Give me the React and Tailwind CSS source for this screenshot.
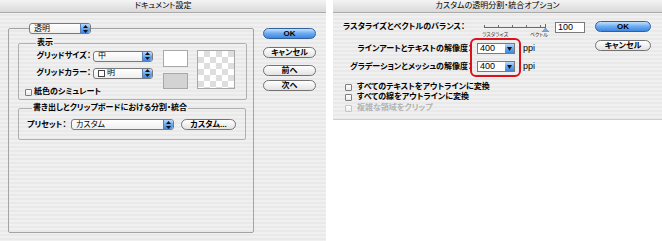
import React from "react";

const stripe =
  "bg-[repeating-linear-gradient(180deg,#f0f0f0_0px,#f0f0f0_2px,#e9e9e9_2px,#e9e9e9_4px)]";

function Stepper() {
  return (
    <div className="flex w-[10px] items-center justify-center rounded-r-[3px] border-l border-[#5b7fb0] bg-linear-to-b from-[#b9d9fb] via-[#6aa8ee] to-[#3f86de]">
      <svg width="5" height="8" viewBox="0 0 5 8">
        <path d="M2.5 0 L5 3 H0 Z" fill="#111" />
        <path d="M0 5 H5 L2.5 8 Z" fill="#111" />
      </svg>
    </div>
  );
}

function Popup({ w, children }) {
  return (
    <div
      className={`flex h-[11px] ${w} items-stretch rounded-[3px] border border-[#7a7a7a] bg-linear-to-b from-white to-[#efefef]`}
    >
      <div className="flex flex-1 items-center gap-[2px] overflow-hidden pl-[4px] text-[8px] leading-none">
        {children}
      </div>
      <Stepper />
    </div>
  );
}

function Btn({ w, blue, children }) {
  return (
    <div
      className={`flex h-[11px] ${w} items-center justify-center rounded-full border text-[8px] font-bold leading-none ${
        blue
          ? "border-[#31609f] bg-linear-to-b from-[#c4e0fd] via-[#6aaaf0] to-[#3e87df]"
          : "border-[#737373] bg-linear-to-b from-white to-[#e3e3e3]"
      }`}
    >
      {children}
    </div>
  );
}

function Check({ disabled }) {
  return (
    <div
      className={`h-[7px] w-[7px] rounded-[1px] border bg-linear-to-b from-white to-[#eaeaea] ${
        disabled ? "border-[#c4c4c4]" : "border-[#7d7d7d]"
      }`}
    />
  );
}

function LeftDialog() {
  return (
    <div className={`flex h-[241px] w-[326px] flex-col ${stripe}`}>
      <div className="flex h-[13px] items-center justify-center border-b border-[#aaaaaa] bg-linear-to-b from-[#f4f4f4] to-[#d9d9d9] text-[8px] leading-none">
        ドキュメント設定
      </div>
      <div className="flex">
        <fieldset className="ml-[8px] mt-[10px] h-[210px] w-[246px] rounded-[2px] border border-[#a3a3a3] pl-[9px]">
          <legend className="ml-[11px]">
            <Popup w="w-[62px]">透明</Popup>
          </legend>
          <fieldset className="mt-[4px] h-[62px] w-[229px] rounded-[2px] border border-[#b0b0b0] pl-[13px]">
            <legend className="ml-[4px] px-[1px] text-[8px] font-bold leading-[10px]">表示</legend>
            <div className="flex">
              <div className="flex flex-col">
                <div className="mt-[3px] flex h-[10px] items-center">
                  <div className="w-[59px] text-right text-[8px] font-bold leading-none">グリッドサイズ：</div>
                  <div className="ml-[2px]">
                    <Popup w="w-[60px]">中</Popup>
                  </div>
                </div>
                <div className="mt-[7px] flex h-[10px] items-center">
                  <div className="w-[59px] text-right text-[8px] font-bold leading-none">グリッドカラー：</div>
                  <div className="ml-[2px]">
                    <Popup w="w-[60px]">
                      <span className="inline-block h-[7px] w-[7px] border border-[#444] bg-white" />
                      明
                    </Popup>
                  </div>
                </div>
                <div className="-ml-[7px] mt-[10px] flex h-[8px] items-center gap-[2px]">
                  <Check />
                  <span className="text-[8px] font-bold leading-none">紙色のシミュレート</span>
                </div>
              </div>
              <div className="ml-[10px] mt-[2px] flex flex-col gap-[6px]">
                <div className="h-[17px] w-[25px] border border-[#a8a8a8] bg-white" />
                <div className="h-[16px] w-[25px] border border-[#a8a8a8] bg-[#d3d3d3]" />
              </div>
              <div className="ml-[9px] mt-[2px] h-[39px] w-[38px] border border-[#a8a8a8] bg-[repeating-conic-gradient(#dedede_0%_25%,#ffffff_0%_50%)] bg-[length:12px_12px]" />
            </div>
          </fieldset>
          <fieldset className="mt-[3px] h-[37px] w-[228px] rounded-[2px] border border-[#b0b0b0] pl-[8px]">
            <legend className="ml-[5px] px-[1px] text-[8px] font-bold leading-[10px]">
              書き出しとクリップボードにおける分割・統合
            </legend>
            <div className="mt-[6px] flex h-[11px] items-center">
              <div className="w-[44px] text-[8px] font-bold leading-none">プリセット：</div>
              <Popup w="w-[103px]">カスタム</Popup>
              <div className="ml-[7px]">
                <Btn w="w-[55px]">カスタム...</Btn>
              </div>
            </div>
          </fieldset>
        </fieldset>
        <div className="ml-[9px] mt-[15px] flex flex-col">
          <Btn w="w-[53px]" blue>
            OK
          </Btn>
          <div className="mt-[8px]">
            <Btn w="w-[53px]">キャンセル</Btn>
          </div>
          <div className="mt-[7px]">
            <Btn w="w-[53px]">前へ</Btn>
          </div>
          <div className="mt-[4px]">
            <Btn w="w-[53px]">次へ</Btn>
          </div>
        </div>
      </div>
    </div>
  );
}

function NumBox({ value }) {
  return (
    <div className="flex h-[11px] items-stretch border border-[#7a7a7a] bg-white">
      <div className="flex w-[27px] items-center pl-[2px] text-[9px] leading-none">{value}</div>
      <div className="flex w-[9px] items-center justify-center bg-linear-to-b from-[#b9d9fb] via-[#6aa8ee] to-[#3f86de]">
        <svg width="5" height="4" viewBox="0 0 5 4">
          <path d="M0 0 H5 L2.5 4 Z" fill="#111" />
        </svg>
      </div>
    </div>
  );
}

function Slider() {
  return (
    <div className="h-[14px] w-[66px]">
      <svg width="66" height="9" viewBox="0 0 66 9" className="block">
        <line x1="1" y1="4.5" x2="63" y2="4.5" stroke="#6a6a6a" strokeWidth="1" />
        {[1, 15, 29, 43, 57].map((x) => (
          <line key={x} x1={x + 0.5} y1="2" x2={x + 0.5} y2="4.5" stroke="#6a6a6a" strokeWidth="1" />
        ))}
        <line x1="62.5" y1="1" x2="62.5" y2="4.5" stroke="#6a6a6a" strokeWidth="1" />
        <path d="M62.5 5 L66 9 H59 Z" fill="#7fa9d8" stroke="#4d72a3" strokeWidth="0.5" />
      </svg>
      <div className="flex justify-between text-[5px] leading-none text-[#333]">
        <span className="-ml-[1px]">ラスタライズ</span>
        <span className="mr-[1px]">ベクトル</span>
      </div>
    </div>
  );
}

function RightDialog() {
  return (
    <div className={`relative ml-[7px] flex h-[120px] w-[329px] flex-col border-b border-[#cfcfcf] ${stripe}`}>
      <div className="flex h-[13px] items-center justify-center border-b border-[#aaaaaa] bg-linear-to-b from-[#f4f4f4] to-[#d9d9d9] text-[8px] leading-none">
        カスタムの透明分割・統合オプション
      </div>
      <div className="flex">
        <div className="flex w-[262px] flex-col pl-[10px]">
          <div className="mt-[8px] flex h-[12px] items-center">
            <div className="w-[140px] text-[8px] font-bold leading-none">ラスタライズとベクトルのバランス：</div>
            <div className="mt-[5px]">
              <Slider />
            </div>
            <div className="ml-[6px]">
              <div className="flex h-[11px] w-[30px] items-center border border-[#7a7a7a] bg-white pl-[2px] text-[9px] leading-none">
                100
              </div>
            </div>
          </div>
          <div className="mt-[10px] flex h-[11px] items-center">
            <div className="w-[129px] text-right text-[8px] font-bold leading-none">ラインアートとテキストの解像度：</div>
            <div className="ml-[5px]">
              <NumBox value="400" />
            </div>
            <span className="ml-[8px] text-[9px] leading-none">ppi</span>
          </div>
          <div className="mt-[7px] flex h-[11px] items-center">
            <div className="w-[129px] text-right text-[8px] font-bold leading-none">グラデーションとメッシュの解像度：</div>
            <div className="ml-[5px]">
              <NumBox value="400" />
            </div>
            <span className="ml-[8px] text-[9px] leading-none">ppi</span>
          </div>
          <div className="ml-[2px] mt-[10px] flex h-[10px] items-center gap-[5px]">
            <Check />
            <span className="text-[8px] font-bold leading-none">すべてのテキストをアウトラインに変換</span>
          </div>
          <div className="ml-[2px] flex h-[10px] items-center gap-[5px]">
            <Check />
            <span className="text-[8px] font-bold leading-none">すべての線をアウトラインに変換</span>
          </div>
          <div className="ml-[2px] mt-[1px] flex h-[10px] items-center gap-[5px]">
            <Check disabled />
            <span className="text-[8px] font-bold leading-none text-[#b4b4b4]">複雑な領域をクリップ</span>
          </div>
        </div>
        <div className="flex flex-col pt-[8px]">
          <Btn w="w-[56px]" blue>
            OK
          </Btn>
          <div className="mt-[8px]">
            <Btn w="w-[56px]">キャンセル</Btn>
          </div>
        </div>
      </div>
      <div className="absolute left-[137px] top-[38px] h-[39px] w-[51px] rounded-[6px] border-2 border-[#e0101a]" />
    </div>
  );
}

export default function App() {
  return (
    <div className="flex h-[241px] w-[662px] items-start overflow-hidden bg-white font-['Liberation_Sans','Noto_Sans_CJK_JP',sans-serif] text-black [font-feature-settings:'palt']">
      <LeftDialog />
      <RightDialog />
    </div>
  );
}
